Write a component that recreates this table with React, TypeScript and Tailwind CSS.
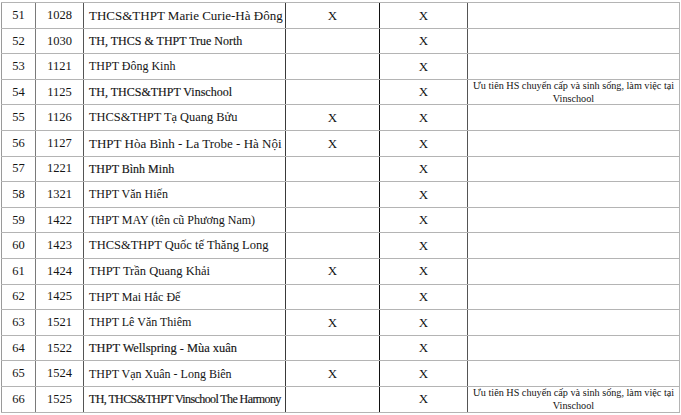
import React from "react";

type Row = {
  n: number;
  code: string;
  name: string;
  a: boolean;
  b: boolean;
  note?: boolean;
  heavy?: boolean;
  size: string;
};

const rows: Row[] = [
  { n: 51, code: "1028", name: "THCS&THPT Marie Curie-Hà Đông", a: true, b: true, size: "text-[13px]" },
  { n: 52, code: "1030", name: "TH, THCS & THPT True North", a: false, b: true, heavy: true, size: "text-[12px]" },
  { n: 53, code: "1121", name: "THPT Đông Kinh", a: false, b: true, size: "text-[12px]" },
  { n: 54, code: "1125", name: "TH, THCS&THPT Vinschool", a: false, b: true, note: true, heavy: true, size: "text-[12px]" },
  { n: 55, code: "1126", name: "THCS&THPT Tạ Quang Bửu", a: true, b: true, size: "text-[12.4px]" },
  { n: 56, code: "1127", name: "THPT Hòa Bình - La Trobe - Hà Nội", a: true, b: true, size: "text-[13px]" },
  { n: 57, code: "1221", name: "THPT Bình Minh", a: false, b: true, heavy: true, size: "text-[12px]" },
  { n: 58, code: "1321", name: "THPT Văn Hiến", a: false, b: true, size: "text-[12px]" },
  { n: 59, code: "1422", name: "THPT MAY (tên cũ Phương Nam)", a: false, b: true, size: "text-[12px]" },
  { n: 60, code: "1423", name: "THCS&THPT Quốc tế Thăng Long", a: false, b: true, size: "text-[12.5px]" },
  { n: 61, code: "1424", name: "THPT Trần Quang Khải", a: true, b: true, size: "text-[12.5px]" },
  { n: 62, code: "1425", name: "THPT Mai Hắc Đế", a: false, b: true, size: "text-[12px]" },
  { n: 63, code: "1521", name: "THPT Lê Văn Thiêm", a: true, b: true, size: "text-[12px]" },
  { n: 64, code: "1522", name: "THPT Wellspring - Mùa xuân", a: false, b: true, heavy: true, size: "text-[12.4px]" },
  { n: 65, code: "1524", name: "THPT Vạn Xuân - Long Biên", a: true, b: true, size: "text-[12px]" },
  {
    n: 66,
    code: "1525",
    name: "TH, THCS&THPT Vinschool The Harmony",
    a: false,
    b: true,
    note: true,
    heavy: true,
    size: "text-[12px] tracking-[-0.6px]",
  },
];

export default function App() {
  return (
    <div className="w-[681px] h-[415px] bg-white pl-px pt-[2px] text-[#141414] [font-family:'Liberation_Serif','Times_New_Roman',serif] overflow-hidden">
      <div className="flex flex-col w-[679px] border-b border-[#b4b4b4]">
        {rows.map((r) => (
          <div key={r.n} className="flex h-[25.6px] border-t border-[#b4b4b4]">
            <div className="w-[34px] border-l border-[#9a9a9a] flex items-center justify-center text-[12.5px]">
              {r.n}
            </div>
            <div className="w-[48px] border-l border-[#7a7a7a] flex items-center justify-center text-[12.5px]">
              {r.code}
            </div>
            <div
              className={
                "w-[202px] border-l border-[#555] flex items-center pl-[5px] whitespace-nowrap overflow-hidden " +
                r.size +
                (r.heavy ? " [-webkit-text-stroke:0.15px_#141414]" : "")
              }
            >
              {r.name}
            </div>
            <div className="w-[94px] border-l border-[#3a3a3a] flex items-center justify-center text-[13px]">
              {r.a ? "X" : ""}
            </div>
            <div className="w-[88px] border-l border-[#111] flex items-center justify-center text-[13px]">
              {r.b ? "X" : ""}
            </div>
            <div className="w-[213px] border-l border-r border-l-[#555] border-r-[#b4b4b4] flex items-center justify-center text-center text-[10.2px] leading-[12.5px] pt-px">
              {r.note ? (
                <span className="whitespace-nowrap">
                  Ưu tiên HS chuyển cấp và sinh sống, làm việc tại
                  <br />
                  Vinschool
                </span>
              ) : null}
            </div>
          </div>
        ))}
      </div>
    </div>
  );
}
